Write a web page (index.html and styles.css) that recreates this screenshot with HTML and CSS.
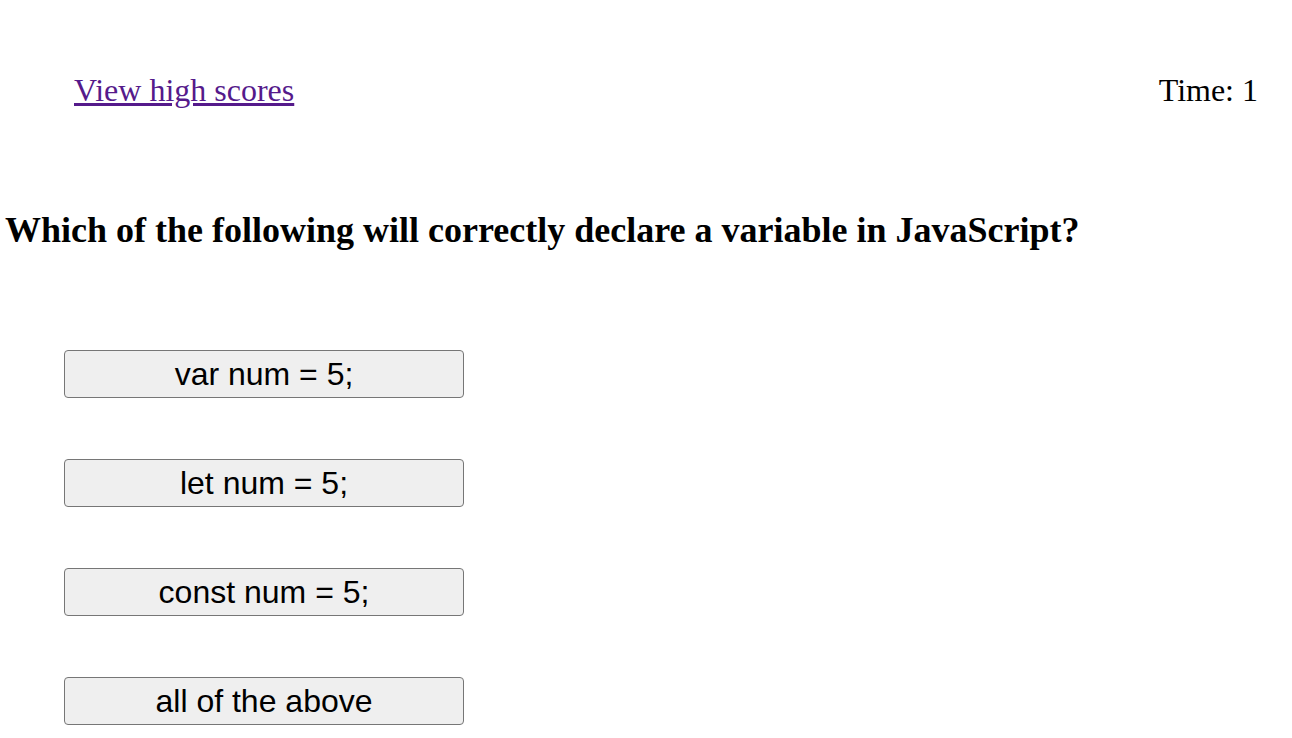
FILE: index.html
```html
<!DOCTYPE html>
<html>
<head>
<meta charset="utf-8">
<link rel="stylesheet" href="styles.css">
</head>
<body>
<header class="top">
  <a class="scores" href="#">View high scores</a>
  <span class="timer">Time: 1</span>
</header>
<main class="quiz">
  <h1 class="question">Which of the following will correctly declare a variable in JavaScript?</h1>
  <div class="answers">
    <button class="answer">var num = 5;</button>
    <button class="answer">let num = 5;</button>
    <button class="answer">const num = 5;</button>
    <button class="answer">all of the above</button>
  </div>
</main>
</body>
</html>
```
FILE: styles.css
```css
html, body {
  margin: 0;
  padding: 0;
  background: #ffffff;
}
body {
  font-family: "Liberation Serif", "Times New Roman", serif;
  color: #000;
}
.top {
  display: flex;
  justify-content: space-between;
  align-items: baseline;
  padding: 72px 34px 0 74px;
  font-size: 32px;
}
.scores {
  color: #551a8b;
  text-decoration: underline;
}
.question {
  margin: 100px 0 0 5px;
  font-size: 36px;
  font-weight: bold;
}
.answers {
  display: flex;
  flex-direction: column;
  align-items: flex-start;
  gap: 61px;
  margin: 99px 0 0 64px;
}
.answer {
  width: 400px;
  height: 48px;
  padding: 0;
  font-family: "Liberation Sans", Arial, sans-serif;
  font-size: 32px;
  color: #000;
  background: #efefef;
  border: 1px solid #767676;
  border-radius: 4px;
}
```
